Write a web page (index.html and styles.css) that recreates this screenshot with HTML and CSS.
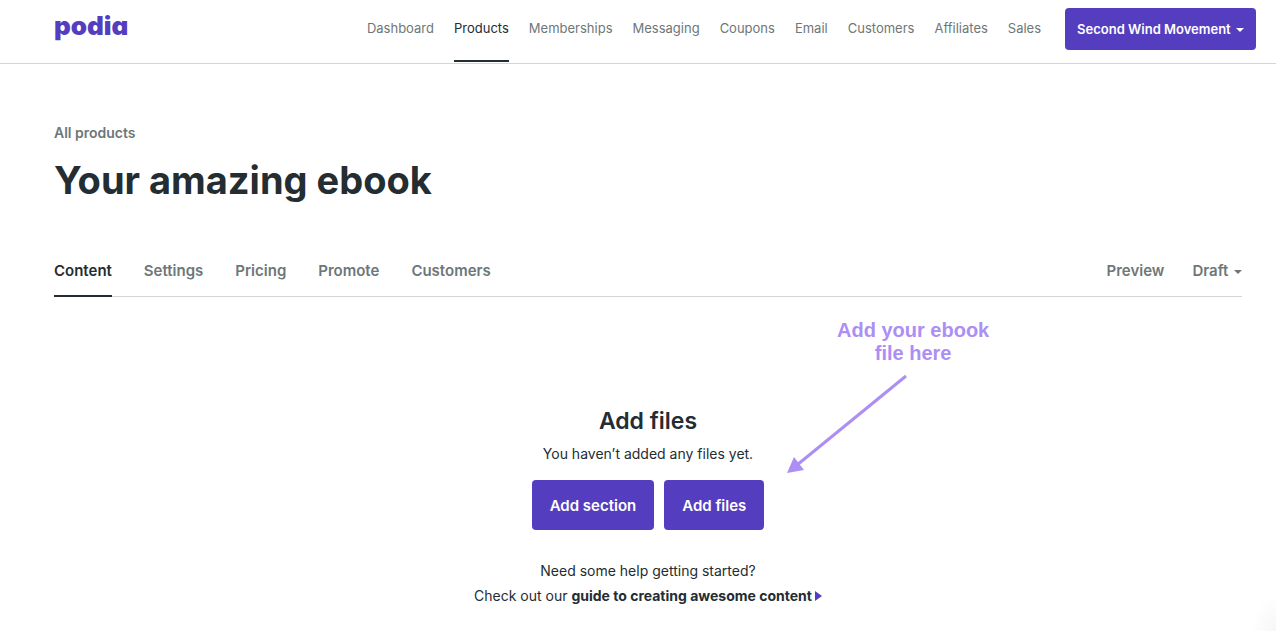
FILE: index.html
```html
<!DOCTYPE html>
<html lang="en">
<head>
    <meta charset="UTF-8">
    <meta name="viewport" content="width=device-width, initial-scale=1.0">
    <title>Your amazing ebook - Podia</title>
    <link rel="stylesheet" href="styles.css">
</head>
<body>
    <header class="header">
        <a href="#" class="logo">podia</a>
        <nav class="main-nav">
            <a href="#">Dashboard</a>
            <a href="#" class="active">Products</a>
            <a href="#">Memberships</a>
            <a href="#">Messaging</a>
            <a href="#">Coupons</a>
            <a href="#">Email</a>
            <a href="#">Customers</a>
            <a href="#">Affiliates</a>
            <a href="#">Sales</a>
        </nav>
        <button type="button" class="account-btn">Second Wind Movement <span class="caret"></span></button>
    </header>

    <main class="page">
        <a href="#" class="back-link">All products</a>
        <h1>Your amazing ebook</h1>

        <div class="tabs">
            <nav class="tab-list">
                <a href="#" class="active">Content</a>
                <a href="#">Settings</a>
                <a href="#">Pricing</a>
                <a href="#">Promote</a>
                <a href="#">Customers</a>
            </nav>
            <div class="tab-actions">
                <a href="#">Preview</a>
                <button type="button" class="status-btn">Draft <span class="caret"></span></button>
            </div>
        </div>

        <section class="empty-state">
            <h2>Add files</h2>
            <p>You haven’t added any files yet.</p>
            <div class="buttons">
                <button type="button" class="btn">Add section</button>
                <button type="button" class="btn">Add files</button>
            </div>
            <p class="help">
                Need some help getting started?<br>
                Check out our <a href="#">guide to creating awesome content<span class="arrow"></span></a>
            </p>

            <!-- Hint pointing at the Add files button -->
            <div class="hint">
                <div class="hint-text">Add your ebook<br>file here</div>
                <svg class="hint-arrow" width="122" height="100" viewBox="0 0 122 100">
                    <line x1="119" y1="2" x2="10" y2="91" stroke="#ac8ef5" stroke-width="3"/>
                    <path d="M0 99 L7 83 L17 96 Z" fill="#ac8ef5"/>
                </svg>
            </div>
        </section>
    </main>

    <div class="corner-shade"></div>
</body>
</html>
```

FILE: styles.css
```css
* {
    margin: 0;
    padding: 0;
    box-sizing: border-box;
}

body {
    font-family: Inter, "Liberation Sans", sans-serif;
    font-size: 14px;
    color: #232d32;
    background: #fff;
}

a {
    color: inherit;
    text-decoration: none;
}

button {
    font-family: inherit;
    border: none;
    cursor: pointer;
}

.header {
    display: flex;
    align-items: flex-start;
    height: 64px;
    padding: 0 20px 0 54px;
    border-bottom: 1px solid #d3d6d7;
}

.logo {
    margin-right: auto;
    padding-top: 9px;
    font-size: 26px;
    line-height: 34px;
    font-weight: 900;
    font-feature-settings: "cv11";
    color: #553dbf;
}

.main-nav {
    display: flex;
    gap: 20px;
    margin-right: 24px;
}

.main-nav a {
    height: 62px;
    padding-top: 18px;
    font-size: 13px;
    line-height: 21px;
    color: #6d7778;
    border-bottom: 2px solid transparent;
}

.main-nav a.active {
    color: #232d32;
    border-bottom-color: #232d32;
}

.caret {
    display: inline-block;
    margin-left: 2px;
    border: 4px solid transparent;
    border-top-color: currentColor;
    border-bottom: none;
    vertical-align: 2px;
}

.account-btn {
    height: 42px;
    margin-top: 8px;
    padding: 0 12px;
    border-radius: 4px;
    font-size: 13px;
    font-weight: 600;
    color: #fff;
    background: #553dbf;
}

.page {
    padding: 58px 34px 24px 54px;
}

.back-link {
    display: block;
    line-height: 22px;
    font-weight: 600;
    color: #6d7778;
}

h1 {
    margin-top: 12px;
    font-size: 38px;
    line-height: 48px;
    font-weight: 700;
}

.tabs {
    display: flex;
    justify-content: space-between;
    margin-top: 56px;
    border-bottom: 1px solid #d3d6d7;
    font-size: 15px;
    line-height: 22px;
    font-weight: 600;
    color: #6d7778;
}

.tab-list {
    display: flex;
    gap: 32px;
    margin-bottom: -1px;
}

.tab-list a {
    padding-bottom: 13px;
    border-bottom: 2px solid transparent;
}

.tab-list a.active {
    color: #232d32;
    border-bottom-color: #232d32;
}

.tab-actions {
    display: flex;
    align-items: flex-start;
    gap: 28px;
}

.status-btn {
    font-size: 15px;
    line-height: 22px;
    font-weight: 600;
    color: inherit;
    background: none;
}

.empty-state {
    position: relative;
    padding-top: 108px;
    text-align: center;
    line-height: 25px;
}

h2 {
    margin-bottom: 4px;
    font-size: 23px;
    line-height: 32px;
    font-weight: 600;
}

.buttons {
    display: flex;
    justify-content: center;
    gap: 10px;
    margin-top: 14px;
}

.btn {
    height: 50px;
    padding: 0 18px;
    border-radius: 4px;
    font-size: 15px;
    font-weight: 600;
    color: #fff;
    background: #553dbf;
}

.help {
    margin-top: 28px;
}

.help a {
    font-weight: 700;
}

.arrow {
    display: inline-block;
    margin-left: 3px;
    border: 5px solid transparent;
    border-left: 7px solid #553dbf;
    border-right: none;
}

.hint {
    position: absolute;
    top: 22px;
    left: 50%;
    margin-left: 139px;
}

.hint-text {
    margin-left: 50px;
    font-family: "Liberation Sans", Arial, sans-serif;
    font-size: 20px;
    line-height: 23px;
    font-weight: 700;
    color: #ac8ef5;
    white-space: nowrap;
}

.hint-arrow {
    display: block;
    margin-top: 9px;
}

.corner-shade {
    position: fixed;
    right: 0;
    bottom: 0;
    width: 24px;
    height: 36px;
    background: radial-gradient(farthest-side at 100% 100%, #f6f6f6, #fff);
}
```
